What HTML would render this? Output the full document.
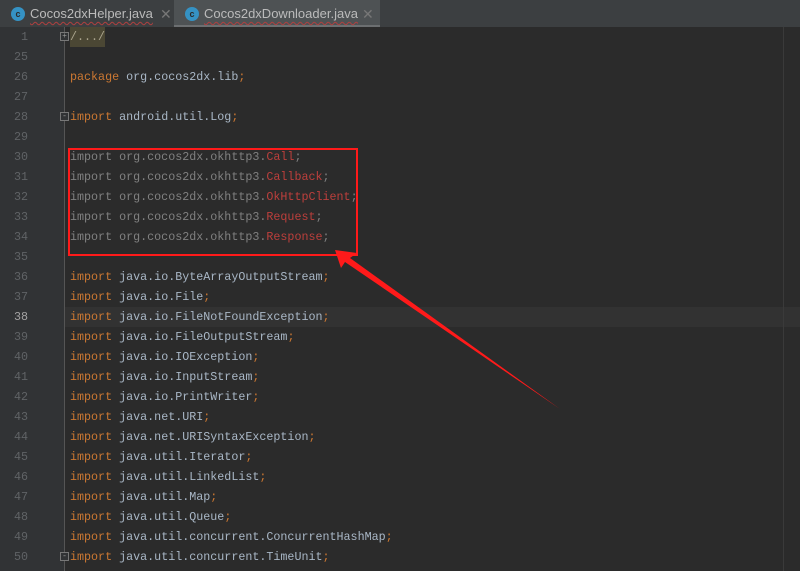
<!DOCTYPE html><html><head><style>
body{margin:0;width:800px;height:571px;background:#2b2b2b;overflow:hidden;position:relative;font-family:"Liberation Mono",monospace}
.tabs{position:absolute;left:0;top:0;width:800px;height:27px;background:#3c3f41;border-bottom:1px solid #2b2b2b}
.tab{position:absolute;top:0;height:26px;font:13px "Liberation Sans",sans-serif;color:#bbb;line-height:28px}
.tab .c{position:absolute;left:11px;top:7px;width:14px;height:14px;border-radius:50%;background:#3592c4;color:#2b2b2b;font:bold 9px "Liberation Sans";text-align:center;line-height:14px}
.tab .n{position:absolute;left:30px;text-decoration:underline wavy #b04040;text-decoration-thickness:1px;text-underline-offset:3px}
.tab .x{position:absolute;color:#777;font-size:14px}
.gut{position:absolute;left:0;top:27px;width:64px;height:544px;background:#313335;border-right:1px solid #555}
.row{position:absolute;left:0;height:20px;line-height:20px;font-size:11.7px;width:800px}
.ln{position:absolute;left:0;width:28px;text-align:right;color:#606366}
.code{position:absolute;left:70px;color:#a9b7c6;white-space:pre}
.k{color:#cc7832}.g{color:#808080}.r{color:#bc3f3c}
</style></head><body>
<div class="tabs">
<div class="tab" style="left:0;width:170px"><div class="c">c</div><span class="n">Cocos2dxHelper.java</span><span class="x" style="left:160px">✕</span></div>
<div class="tab" style="left:174px;width:206px;background:#4e5254;border-bottom:2px solid #6c6f71;height:25px"><div class="c">c</div><span class="n">Cocos2dxDownloader.java</span><span class="x" style="left:188px">✕</span></div>
</div>
<div class="gut"></div>
<div style="position:absolute;left:65px;top:307px;width:735px;height:20px;background:#323232"></div>
<div style="position:absolute;left:60px;top:32px;width:7px;height:7px;border:1px solid #777;background:#313335;color:#999;font-size:8px;line-height:7px;text-align:center">+</div>
<div style="position:absolute;left:60px;top:112px;width:7px;height:7px;border:1px solid #777;background:#313335;color:#999;font-size:8px;line-height:7px;text-align:center">-</div>
<div style="position:absolute;left:60px;top:552px;width:7px;height:7px;border:1px solid #777;background:#313335;color:#999;font-size:8px;line-height:7px;text-align:center">-</div>
<div class="row" style="top:27px"><span class="ln">1</span><span class="code" style="background:#4b4734;color:#a9a38c">/.../</span></div>
<div class="row" style="top:47px"><span class="ln">25</span></div>
<div class="row" style="top:67px"><span class="ln">26</span><span class="code"><span class="k">package</span> org.cocos2dx.lib<span class="k">;</span></span></div>
<div class="row" style="top:87px"><span class="ln">27</span></div>
<div class="row" style="top:107px"><span class="ln">28</span><span class="code"><span class="k">import</span> android.util.Log<span class="k">;</span></span></div>
<div class="row" style="top:127px"><span class="ln">29</span></div>
<div class="row" style="top:147px"><span class="ln">30</span><span class="code g">import org.cocos2dx.okhttp3.<span class="r">Call</span>;</span></div>
<div class="row" style="top:167px"><span class="ln">31</span><span class="code g">import org.cocos2dx.okhttp3.<span class="r">Callback</span>;</span></div>
<div class="row" style="top:187px"><span class="ln">32</span><span class="code g">import org.cocos2dx.okhttp3.<span class="r">OkHttpClient</span>;</span></div>
<div class="row" style="top:207px"><span class="ln">33</span><span class="code g">import org.cocos2dx.okhttp3.<span class="r">Request</span>;</span></div>
<div class="row" style="top:227px"><span class="ln">34</span><span class="code g">import org.cocos2dx.okhttp3.<span class="r">Response</span>;</span></div>
<div class="row" style="top:247px"><span class="ln">35</span></div>
<div class="row" style="top:267px"><span class="ln">36</span><span class="code"><span class="k">import</span> java.io.ByteArrayOutputStream<span class="k">;</span></span></div>
<div class="row" style="top:287px"><span class="ln">37</span><span class="code"><span class="k">import</span> java.io.File<span class="k">;</span></span></div>
<div class="row" style="top:307px"><span class="ln" style="color:#a4a3a3">38</span><span class="code"><span class="k">import</span> java.io.FileNotFoundException<span class="k">;</span></span></div>
<div class="row" style="top:327px"><span class="ln">39</span><span class="code"><span class="k">import</span> java.io.FileOutputStream<span class="k">;</span></span></div>
<div class="row" style="top:347px"><span class="ln">40</span><span class="code"><span class="k">import</span> java.io.IOException<span class="k">;</span></span></div>
<div class="row" style="top:367px"><span class="ln">41</span><span class="code"><span class="k">import</span> java.io.InputStream<span class="k">;</span></span></div>
<div class="row" style="top:387px"><span class="ln">42</span><span class="code"><span class="k">import</span> java.io.PrintWriter<span class="k">;</span></span></div>
<div class="row" style="top:407px"><span class="ln">43</span><span class="code"><span class="k">import</span> java.net.URI<span class="k">;</span></span></div>
<div class="row" style="top:427px"><span class="ln">44</span><span class="code"><span class="k">import</span> java.net.URISyntaxException<span class="k">;</span></span></div>
<div class="row" style="top:447px"><span class="ln">45</span><span class="code"><span class="k">import</span> java.util.Iterator<span class="k">;</span></span></div>
<div class="row" style="top:467px"><span class="ln">46</span><span class="code"><span class="k">import</span> java.util.LinkedList<span class="k">;</span></span></div>
<div class="row" style="top:487px"><span class="ln">47</span><span class="code"><span class="k">import</span> java.util.Map<span class="k">;</span></span></div>
<div class="row" style="top:507px"><span class="ln">48</span><span class="code"><span class="k">import</span> java.util.Queue<span class="k">;</span></span></div>
<div class="row" style="top:527px"><span class="ln">49</span><span class="code"><span class="k">import</span> java.util.concurrent.ConcurrentHashMap<span class="k">;</span></span></div>
<div class="row" style="top:547px"><span class="ln">50</span><span class="code"><span class="k">import</span> java.util.concurrent.TimeUnit<span class="k">;</span></span></div>
<div style="position:absolute;left:783px;top:27px;width:1px;height:544px;background:#3a3a3a"></div>
<div style="position:absolute;left:68px;top:148px;width:286px;height:104px;border:2px solid #ff1a1a"></div>
<svg style="position:absolute;left:0;top:0" width="800" height="571"><polygon points="335,250 357,253 350,258 560,409 345,262 341,268" fill="#ff1a1a"/></svg>
</body></html>
